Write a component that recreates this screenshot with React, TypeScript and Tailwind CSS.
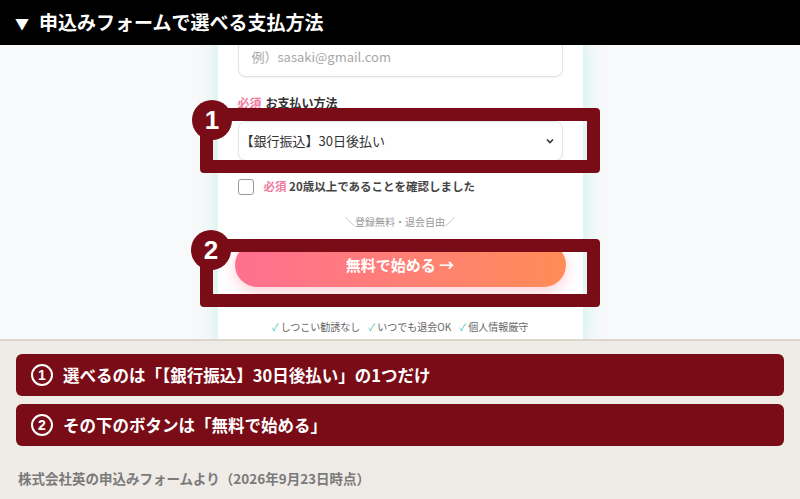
import React from "react";

const jp = { fontFamily: '"Noto Sans CJK JP", "Noto Sans", sans-serif' };

function Badge({ n, className }: { n: string; className: string }) {
  return (
    <div
      className={`absolute flex h-[40px] w-[40px] items-center justify-center rounded-full bg-[#7a0c17] text-[26px] font-bold leading-none text-white ${className}`}
      style={{ fontFamily: '"Liberation Sans", Arial, sans-serif' }}
    >
      {n}
    </div>
  );
}

function Banner({ n, children }: { n: string; children: React.ReactNode }) {
  return (
    <div className="flex h-[42px] items-center gap-[10px] rounded-[6px] bg-[#7a0c17] pl-[15px] text-white">
      <span
        className="flex h-[22px] w-[22px] items-center justify-center rounded-full border-[2px] border-white text-[14px] font-bold leading-none"
        style={{ fontFamily: '"Liberation Sans", Arial, sans-serif' }}
      >
        {n}
      </span>
      <span className="text-[16.5px] font-bold">{children}</span>
    </div>
  );
}

export default function App() {
  return (
    <div className="flex h-[499px] w-[800px] flex-col overflow-hidden bg-[#efece7]" style={jp}>
      {/* header */}
      <div className="flex h-[45px] shrink-0 items-center gap-[10px] bg-black pl-[15px] text-white">
        <span className="text-[14px] leading-none">▼</span>
        <span className="text-[19px] font-bold">申込みフォームで選べる支払方法</span>
      </div>

      {/* screenshot region */}
      <div className="relative h-[294px] shrink-0 overflow-hidden bg-[#f7f9fa]">
        <div className="mx-auto flex h-full w-[365px] flex-col bg-white px-[20px] shadow-[0_0_14px_4px_rgba(200,238,232,0.7)]">
          <div className="-mt-[8px] flex h-[40px] shrink-0 items-center rounded-[8px] border border-[#e3e3e3] bg-white pl-[13px] text-[13px] text-[#a8a8a8] shadow-[0_1px_2px_rgba(0,0,0,0.05)]">
            例）sasaki@gmail.com
          </div>
          <div className="mt-[17px] flex h-[18px] items-center gap-[4px] text-[12px] font-bold">
            <span className="text-[#f07aa0]">必須</span>
            <span className="text-[#333]">お支払い方法</span>
          </div>
          <div className="mt-[9px] flex h-[40px] shrink-0 items-center justify-between rounded-[8px] border border-[#e3e3e3] bg-white pl-[2px] pr-[7px] text-[13px] text-[#333] shadow-[0_1px_2px_rgba(0,0,0,0.05)]">
            <span>【銀行振込】30日後払い</span>
            <svg width="10" height="10" viewBox="0 0 10 10">
              <path d="M2 3.5 L5 6.5 L8 3.5" fill="none" stroke="#333" strokeWidth="1.6" />
            </svg>
          </div>
          <div className="mt-[18px] flex h-[16px] items-center gap-[10px]">
            <span className="h-[16px] w-[16px] rounded-[3px] border-[1.5px] border-[#999] bg-white" />
            <span className="text-[11.5px] font-bold">
              <span className="text-[#f07aa0]">必須</span>
              <span className="text-[#444]"> 20歳以上であることを確認しました</span>
            </span>
          </div>
          <div className="mt-[20px] text-center text-[10px] leading-[14px] text-[#999]">＼登録無料・退会自由／</div>
          <div className="-mx-[3px] mt-[14px] flex h-[44px] shrink-0 items-center justify-center rounded-full bg-gradient-to-r from-[#ff6f90] to-[#ff8c55] text-[15px] font-bold text-white shadow-[0_4px_14px_rgba(255,110,140,0.35)]">
            無料で始める →
          </div>
          <div className="mt-[32px] flex h-[14px] items-center justify-center gap-[8px] text-[10px] text-[#666]">
            <span><span className="text-[#3bbfc0]">✓</span> しつこい勧誘なし</span>
            <span><span className="text-[#3bbfc0]">✓</span> いつでも退会OK</span>
            <span><span className="text-[#3bbfc0]">✓</span> 個人情報厳守</span>
          </div>
        </div>

        {/* annotation overlays */}
        <div className="absolute left-[200px] top-[63px] h-[65px] w-[400px] rounded-[4px] border-[13px] border-[#7a0c17]" />
        <div className="absolute left-[200px] top-[194px] h-[68px] w-[400px] rounded-[4px] border-[13px] border-[#7a0c17]" />
        <Badge n="1" className="left-[192px] top-[55px]" />
        <Badge n="2" className="left-[191px] top-[185px]" />
      </div>
      <div className="h-[2px] shrink-0 bg-[#dbd5cb]" />

      {/* bottom */}
      <div className="flex flex-col gap-[8px] px-[16px] pt-[13px]">
        <Banner n="1">選べるのは「【銀行振込】30日後払い」の1つだけ</Banner>
        <Banner n="2">その下のボタンは「無料で始める」</Banner>
      </div>
      <div className="mt-[22px] pl-[18px] text-[13.5px] font-bold text-[#7a7a7a]">
        株式会社英の申込みフォームより（2026年9月23日時点）
      </div>
    </div>
  );
}
